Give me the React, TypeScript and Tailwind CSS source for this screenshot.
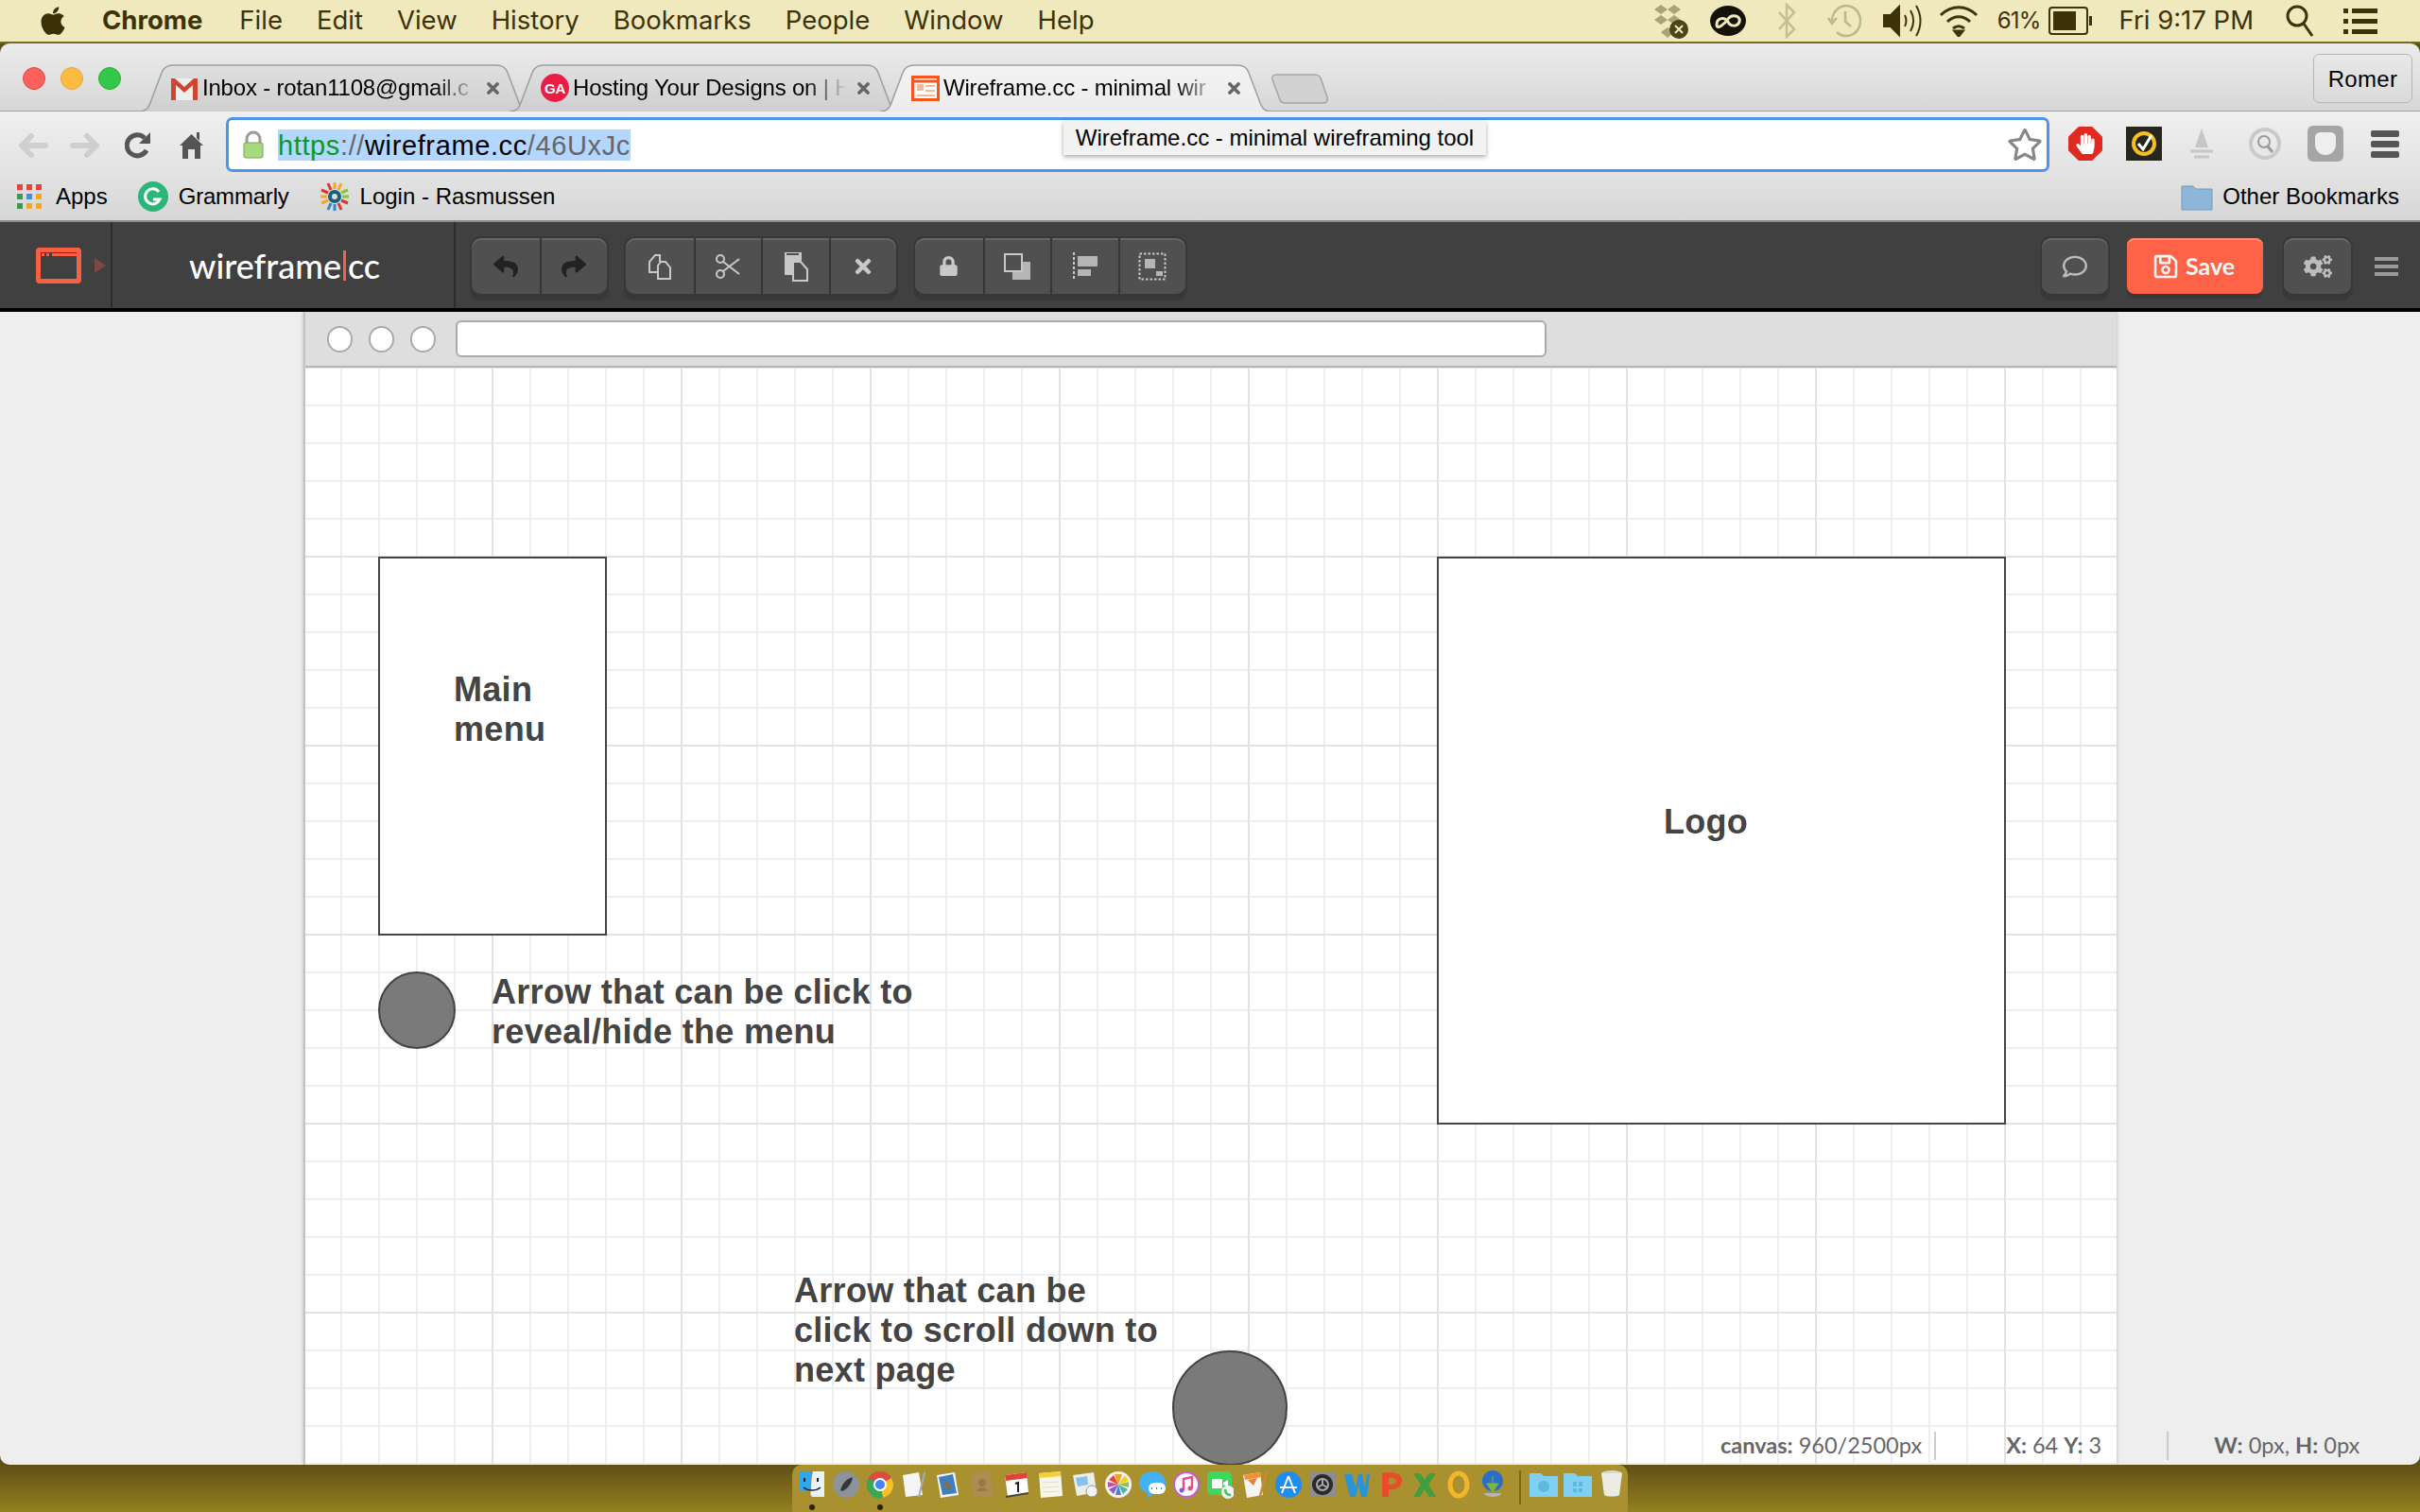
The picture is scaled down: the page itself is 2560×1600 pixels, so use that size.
import { FaApple, FaCogs, FaLock, FaRegComment, FaRegSave, FaRegStar, FaReply, FaShare, FaTimes, FaHandPaper } from "react-icons/fa";

const UI = "font-['Liberation_Sans',sans-serif]";
const LATO = "font-['Lato',sans-serif]";

function Bars({ cls }: { cls: string }) {
  return (
    <div className="flex flex-col gap-[4px]">
      <div className={cls} />
      <div className={cls} />
      <div className={cls} />
    </div>
  );
}

function MenuBar() {
  const items = ["File", "Edit", "View", "History", "Bookmarks", "People", "Window", "Help"];
  return (
    <div className="flex h-[46px] items-center border-b-2 border-[#7a6a1e] bg-[#f0e9bd] text-[27.5px] text-[#3d3208] font-['Inter',sans-serif]">
      <FaApple className="ml-[39px] text-[34px] text-[#3a3008]" />
      <span className="ml-[35px] font-bold">Chrome</span>
      <div className="ml-[39px] flex gap-[36px]">
        {items.map(i => <span key={i}>{i}</span>)}
      </div>
      <div className="ml-auto flex items-center">
        <svg width="38" height="40" viewBox="0 0 38 40" className="opacity-90">
          <path d="M9 3l7 5-7 5-7-5zM23 3l7 5-7 5-7-5zM9 14l7 5-7 5-7-5zM23 14l7 5-7 5-7-5zM16 27l7 5-7 6-7-6z" fill="#a39c70" />
          <circle cx="28" cy="29" r="10" fill="#3d3208" />
          <path d="M24 25l8 8M32 25l-8 8" stroke="#f0e9bd" strokeWidth="2" />
        </svg>
        <svg width="40" height="40" viewBox="0 0 40 40" className="ml-[22px]">
          <ellipse cx="20" cy="20" rx="19" ry="16" fill="#15120a" />
          <path d="M8 24c0-8 10-8 12-3s10 6 12 0-8-9-12-3-12 12-12 6z" fill="none" stroke="#f0e9bd" strokeWidth="3" />
        </svg>
        <svg width="22" height="38" viewBox="0 0 22 38" fill="none" stroke="#c4bd96" strokeWidth="2.5" className="ml-[31px]">
          <path d="M3 10l16 18-8 8V2l8 8L3 28" />
        </svg>
        <svg width="36" height="38" viewBox="0 0 36 38" fill="none" stroke="#bdb68e" strokeWidth="2.5" className="ml-[32px]">
          <path d="M5 19a15 16 0 1 1 5 12" />
          <path d="M1 16l4 6 5-6" />
          <path d="M19 9v11l6 5" />
        </svg>
        <svg width="42" height="36" viewBox="0 0 42 36" fill="none" stroke="#3d3208" strokeWidth="2" className="ml-[23px]">
          <path d="M1 12h7l9-9v30l-9-9H1z" fill="#3d3208" />
          <path d="M23 12c2 4 2 8 0 12M29 7c4 7 4 15 0 22M35 2c6 10 6 22 0 32" />
        </svg>
        <svg width="42" height="34" viewBox="0 0 42 34" fill="none" stroke="#3d3208" strokeWidth="3" className="ml-[17px]">
          <path d="M2 11c11-11 27-11 38 0M9 18c7-7 17-7 24 0M15 25c4-3 8-3 12 0" />
          <path d="M21 33l-4-5h8z" fill="#3d3208" />
        </svg>
        <span className="ml-[20px] text-[24px] tracking-[-0.8px]">61%</span>
        <div className="relative ml-[8px] flex h-[30px] w-[42px] items-stretch rounded-[4px] border-2 border-[#3d3208] p-[3px]">
          <div className="w-[24px] bg-[#3d3208]" />
        </div>
        <div className="ml-[1px] h-[10px] w-[3px] bg-[#3d3208]" />
        <span className="ml-[29px] text-[27.5px]">Fri 9:17 PM</span>
        <svg width="32" height="36" viewBox="0 0 32 36" fill="none" stroke="#3d3208" strokeWidth="3" className="ml-[33px]">
          <circle cx="13" cy="13" r="10" />
          <path d="M20 21l9 13" />
        </svg>
        <div className="ml-[30px] mr-[45px] flex flex-col gap-[6px]">
          {[0, 1, 2].map(i => (
            <div key={i} className="flex gap-[4px]">
              <div className="h-[5px] w-[5px] bg-[#3d3208]" />
              <div className="h-[5px] w-[27px] bg-[#3d3208]" />
            </div>
          ))}
        </div>
      </div>
    </div>
  );
}

function TabShape({ id, from, to }: { id: string; from: string; to: string }) {
  return (
    <svg className="absolute inset-0" width="414" height="50" viewBox="0 0 414 50">
      <defs>
        <linearGradient id={id} x1="0" y1="0" x2="0" y2="1">
          <stop offset="0" stopColor={from} />
          <stop offset="1" stopColor={to} />
        </linearGradient>
      </defs>
      <path d="M0 50C9 50 11 44 13 38L24 9C26 3 30 1 36 1L378 1C384 1 388 3 390 9L401 38C403 44 405 50 414 50" fill={`url(#${id})`} stroke="#9d9d9d" strokeWidth="1.5" />
    </svg>
  );
}

function Tab({ id, active, icon, title, z }: { id: string; active?: boolean; icon: React.ReactNode; title: string; z: string }) {
  return (
    <div className={`relative -mb-px -mr-[22px] h-[50px] w-[414px] shrink-0 ${z}`}>
      <TabShape id={id} from={active ? "#f3f3f3" : "#dfdfdf"} to={active ? "#ececec" : "#cfcfcf"} />
      <div className={`relative flex h-[50px] items-center pl-[33px] text-[24px] tracking-[-0.2px] text-black ${UI}`}>
        <div className="h-[30px] w-[30px] shrink-0">{icon}</div>
        <span className="ml-[4px] w-[293px] whitespace-nowrap [mask-image:linear-gradient(to_right,black_84%,transparent_99%)]">{title}</span>
        <FaTimes className="ml-[5px] text-[19px] text-[#666]" />
      </div>
    </div>
  );
}

function TabStrip() {
  return (
    <div className="flex h-[72px] items-end rounded-t-[10px] border-b border-[#a2a2a2] bg-[linear-gradient(#ececec,#d7d7d7)]">
      <div className="mb-[22px] ml-[24px] flex gap-[16px]">
        <div className="h-[24px] w-[24px] rounded-full border border-[#e2463f] bg-[#fc615d]" />
        <div className="h-[24px] w-[24px] rounded-full border border-[#e1a73e] bg-[#fdbc40]" />
        <div className="h-[24px] w-[24px] rounded-full border border-[#2dac2f] bg-[#34c84a]" />
      </div>
      <div className="ml-[19px] flex items-end">
        <Tab id="t1" z="z-0" title="Inbox - rotan1108@gmail.c" icon={
          <svg viewBox="0 0 30 30" width="30" height="30">
            <path d="M1 5h28v23H1z" fill="#eee" />
            <path d="M1 5v23h5V12l9 8 9-8v16h5V5h-4L15 14 5 5z" fill="#d0452f" />
          </svg>
        } />
        <Tab id="t2" z="z-0" title="Hosting Your Designs on | H" icon={
          <svg viewBox="0 0 30 30" width="30" height="30">
            <circle cx="15" cy="15" r="15" fill="#ea1e45" />
            <text x="15" y="21" textAnchor="middle" fontSize="15" fontWeight="700" fill="#fff" fontFamily="Liberation Sans">GA</text>
          </svg>
        } />
        <Tab id="t3" active z="z-10" title="Wireframe.cc - minimal wir" icon={
          <svg viewBox="0 0 30 30" width="30" height="30">
            <rect x="1.5" y="3.5" width="27" height="24" fill="#fff" stroke="#f9541d" strokeWidth="3" />
            <path d="M3 8h24" stroke="#f9541d" strokeWidth="3" />
            <path d="M6 11h7v7H6zM15 12h10v2H15zM15 17h10v2H15zM6 22h19v2H6z" fill="#fbb898" />
          </svg>
        } />
        <svg width="66" height="34" viewBox="0 0 64 34" className="relative z-0 mb-[6px] ml-[19px]">
          <path d="M7 2L48 2C52 2 54 4 55 8L61 26C62 30 60 32 57 32L16 32C13 32 11 30 10 26L3 7C2 4 4 2 7 2z" fill="#d2d2d2" stroke="#a5a5a5" strokeWidth="1.5" />
        </svg>
      </div>
      <div className={`mb-[8px] ml-auto mr-[8px] flex h-[52px] w-[105px] items-center justify-center rounded-[6px] border border-[#b5b5b5] pt-[2px] text-[24px] tracking-[0.3px] text-black ${UI}`}>Romer</div>
    </div>
  );
}

function NavArrow({ flip }: { flip?: boolean }) {
  return (
    <svg width="32" height="28" viewBox="0 0 32 28" fill="none" stroke="#cfcfcf" strokeWidth="6" strokeLinecap="round" strokeLinejoin="round" className={flip ? "-scale-x-100" : ""}>
      <path d="M29 14H5M14 4L4 14l10 10" />
    </svg>
  );
}

function Toolbar() {
  return (
    <div className="relative flex h-[64px] items-start bg-[linear-gradient(#efefef,#e3e3e3)] pt-[6px]">
      <div className="ml-[19px] mt-[15px] flex items-center">
        <NavArrow />
        <div className="ml-[23px]"><NavArrow flip /></div>
        <svg width="28" height="30" viewBox="0 0 28 30" fill="none" className="ml-[26px]">
          <path d="M23 20a11 11 0 1 1-2-13" stroke="#555" strokeWidth="5" />
          <path d="M27 1v12H15z" fill="#555" />
        </svg>
        <svg width="25" height="30" viewBox="0 0 25 30" className="ml-[30px]">
          <path d="M12.5 3L25 15h-3v14h-6v-10H9v10H3V15H0zM18 1h3v9l-3-3z" fill="#555" />
        </svg>
      </div>
      <div className="absolute left-[239px] top-[6px] flex h-[58px] w-[1929px] items-center rounded-[7px] border-[3px] border-[#4b96ea] bg-white">
        <svg width="24" height="30" viewBox="0 0 24 30" className="ml-[14px]">
          <path d="M5 14V9a7 7 0 0 1 14 0v5" fill="none" stroke="#9a9a9a" strokeWidth="3" />
          <rect x="2" y="13" width="20" height="16" rx="2" fill="#a8d97f" stroke="#74a851" />
        </svg>
        <div className={`ml-[14px] flex h-[33px] items-center bg-[#b3d7fe] pt-[3px] text-[29px] tracking-[0.62px] ${UI}`}>
          <span className="text-[#0b9a1c]">https</span>
          <span className="text-[#666]">://</span>
          <span className="text-black">wireframe.cc</span>
          <span className="text-[#666]">/46UxJc</span>
        </div>
        <FaRegStar className="ml-auto mr-[4px] text-[38px] text-[#888]" />
      </div>
      <div className="absolute left-[2188px] top-[15px] flex items-center">
        <div className="flex h-[36px] w-[36px] items-center justify-center bg-[#e0291f] [clip-path:polygon(30%_0,70%_0,100%_30%,100%_70%,70%_100%,30%_100%,0_70%,0_30%)]">
          <FaHandPaper className="text-[22px] text-white" />
        </div>
        <div className="ml-[25px] flex h-[36px] w-[38px] items-center justify-center bg-[#26251e]">
          <svg width="28" height="28" viewBox="0 0 28 28" fill="none">
            <circle cx="14" cy="14" r="11" stroke="#f2c11d" strokeWidth="4" />
            <path d="M8 14l5 6 9-15" stroke="#fff" strokeWidth="3" />
          </svg>
        </div>
        <svg width="30" height="34" viewBox="0 0 30 34" className="ml-[27px]">
          <path d="M15 1l7 20H8z" fill="#c6c6c6" />
          <path d="M3 25h24M7 31h16" stroke="#c6c6c6" strokeWidth="3" />
        </svg>
        <svg width="34" height="38" viewBox="0 0 34 38" fill="none" className="ml-[35px]">
          <circle cx="17" cy="19" r="15" stroke="#c9c9c9" strokeWidth="4" />
          <circle cx="16" cy="17" r="6" stroke="#999" strokeWidth="2" />
          <path d="M20 22l5 6" stroke="#999" strokeWidth="3" />
        </svg>
        <div className="ml-[28px] flex h-[38px] w-[38px] items-center justify-center rounded-[6px] bg-[#a5a5a5]">
          <div className="h-[24px] w-[22px] rounded-b-[12px] rounded-t-[6px] bg-[#eeeeee]" />
        </div>
        <div className="ml-[29px]">
          <Bars cls="h-[7px] w-[30px] rounded-[2px] bg-[#555]" />
        </div>
      </div>
      <div className={`absolute left-[1125px] top-[10px] z-20 flex h-[36px] w-[447px] items-center justify-center bg-[#f2f2f2] text-[24px] text-black shadow-[0_2px_5px_rgba(0,0,0,0.35)] ${UI}`}>
        Wireframe.cc - minimal wireframing tool
      </div>
    </div>
  );
}

function BookmarksBar() {
  const apps = ["bg-[#ef4136]", "bg-[#ef4136]", "bg-[#ef4136]", "bg-[#3b9a52]", "bg-[#3d8fe8]", "bg-[#f5a623]", "bg-[#3b9a52]", "bg-[#f5a623]", "bg-[#f5a623]"];
  return (
    <div className={`flex h-[53px] items-center border-b-2 border-[#8c8c8c] bg-[linear-gradient(#e3e3e3,#d6d6d6)] text-[24px] text-black ${UI}`}>
      <div className="ml-[18px] grid grid-cols-3 gap-[4px]">
        {apps.map((c, i) => <div key={i} className={`h-[6px] w-[6px] ${c}`} />)}
      </div>
      <span className="ml-[15px]">Apps</span>
      <svg width="32" height="32" viewBox="0 0 32 32" className="ml-[32px]">
        <circle cx="16" cy="16" r="16" fill="#2cb67a" />
        <path d="M22 11a8 8 0 1 0 1 8h-7" fill="none" stroke="#fff" strokeWidth="3" />
      </svg>
      <span className="ml-[11px] tracking-[-0.2px]">Grammarly</span>
      <svg width="32" height="32" viewBox="0 0 32 32" className="ml-[32px]" strokeWidth="3">
        <circle cx="16" cy="16" r="5" fill="none" stroke="#15607a" strokeWidth="4" />
        <path d="M16 1v7M23 2l-3 7" stroke="#f5a623" />
        <path d="M9 2l3 7M2 9l7 3" stroke="#e1352b" />
        <path d="M30 9l-7 3M31 16h-7" stroke="#8cbf3f" />
        <path d="M30 23l-7-3M23 30l-3-7" stroke="#e1352b" />
        <path d="M16 31v-7M9 30l3-7" stroke="#2f86c9" />
        <path d="M2 23l7-3M1 16h7" stroke="#f5a623" />
      </svg>
      <span className="ml-[11px]">Login - Rasmussen</span>
      <svg width="34" height="30" viewBox="0 0 34 30" className="ml-auto">
        <path d="M1 4h12l3 3h17v22H1z" fill="#8eb6d8" stroke="#6f9cc2" />
      </svg>
      <span className="ml-[10px] mr-[22px]">Other Bookmarks</span>
    </div>
  );
}

function ToolGroup({ children }: { children: React.ReactNode[] }) {
  return (
    <div className="flex h-[59px] rounded-[10px] bg-[#505050] shadow-[inset_0_2px_0_#666,0_0_0_2px_#383838,0_5px_0_2px_#383838]">
      {children.map((c, i) => (
        <div key={i} className={`flex h-full w-[71.5px] items-center justify-center ${i > 0 ? "border-l-2 border-[#353535]" : ""}`}>{c}</div>
      ))}
    </div>
  );
}

function AppToolbar() {
  return (
    <div className="flex h-[95px] items-start border-b-4 border-black bg-[#404040]">
      <div className="flex h-[91px] w-[119px] items-center border-r-2 border-[#2c2c2c]">
        <div className="ml-[38px] h-[38px] w-[48px] rounded-[4px] border-[5px] border-[#fb5f43] pt-[1px]">
          <div className="ml-[1px] flex gap-[2px]">
            <div className="h-[3px] w-[3px] bg-[#fb5f43]" />
            <div className="h-[3px] w-[3px] bg-[#fb5f43]" />
            <div className="ml-[1px] h-[3px] w-[26px] bg-[#fb5f43]" />
          </div>
        </div>
        <div className="ml-[14px] h-0 w-0 border-y-[8px] border-l-[12px] border-y-transparent border-l-[#7b4a40]" />
      </div>
      <div className={`flex h-[91px] w-[363px] items-center border-r-2 border-[#2c2c2c] pl-[81px] text-[36px] font-medium text-white ${LATO}`}>
        <span>wireframe</span>
        <div className="mx-[2px] h-[32px] w-[3px] bg-[#fb5f43]" />
        <span>cc</span>
      </div>
      <div className="ml-[17px] mt-[17px] flex gap-[20px]">
        <ToolGroup>{[
          <FaReply key="u" className="text-[26px] text-[#222]" />,
          <FaShare key="r" className="text-[26px] text-[#222]" />,
        ]}</ToolGroup>
        <ToolGroup>{[
          <svg key="c" width="26" height="28" viewBox="0 0 26 28" fill="none" stroke="#c8c8c8" strokeWidth="2">
            <path d="M12 20H2V9l6-7h5v7" />
            <path d="M14 9h5l5 6v12H11V13z" fill="#505050" />
          </svg>,
          <svg key="s" width="26" height="28" viewBox="0 0 26 28" fill="none" stroke="#c8c8c8" strokeWidth="2">
            <circle cx="5" cy="6" r="4" />
            <circle cx="5" cy="22" r="4" />
            <path d="M8 9l17 13M8 19l17-13" />
          </svg>,
          <svg key="p" width="26" height="32" viewBox="0 0 26 32">
            <path d="M1 1h18v24H1z" fill="#c8c8c8" />
            <path d="M3 3h13" stroke="#505050" strokeWidth="2" />
            <path d="M10 11h8l7 8v12H10z" fill="#505050" stroke="#c8c8c8" strokeWidth="2" />
          </svg>,
          <FaTimes key="x" className="text-[24px] text-[#c8c8c8]" />,
        ]}</ToolGroup>
        <ToolGroup>{[
          <FaLock key="l" className="text-[21px] text-[#c8c8c8]" />,
          <svg key="o" width="30" height="30" viewBox="0 0 30 30" fill="none">
            <path d="M10 10h19v19H10z" fill="#b5b5b5" />
            <path d="M2 2h18v18H2z" fill="#505050" stroke="#c8c8c8" strokeWidth="2" />
          </svg>,
          <svg key="a" width="28" height="32" viewBox="0 0 28 32">
            <path d="M2 1v30" stroke="#c8c8c8" strokeWidth="2" strokeDasharray="3 2" />
            <path d="M6 5h21v11H6zM6 19h14v7H6z" fill="#b5b5b5" />
          </svg>,
          <svg key="g" width="30" height="30" viewBox="0 0 30 30">
            <rect x="1.5" y="1.5" width="27" height="27" fill="none" stroke="#c8c8c8" strokeWidth="2" strokeDasharray="2.5 2" />
            <path d="M7 7h11v10H7zM19 20h7v5h-7z" fill="#b5b5b5" />
          </svg>,
        ]}</ToolGroup>
      </div>
      <div className="ml-auto mt-[17px] flex items-start">
        <div className="flex h-[59px] w-[70px] items-center justify-center rounded-[10px] bg-[#505050] shadow-[inset_0_2px_0_#666,0_0_0_2px_#383838,0_5px_0_2px_#383838]">
          <FaRegComment className="text-[26px] text-[#bdbdbd]" />
        </div>
        <div className={`ml-[20px] flex h-[59px] w-[144px] items-center justify-center rounded-[8px] bg-[#ff6347] pr-[3px] text-[25px] font-bold text-[#f5f5f5] shadow-[inset_0_2px_0_#ff8a72,0_5px_0_0_#383838] ${LATO}`}>
          <FaRegSave className="mr-[7px] text-[28px]" />
          Save
        </div>
        <div className="ml-[22px] flex h-[59px] w-[71px] items-center justify-center rounded-[10px] bg-[#505050] shadow-[inset_0_2px_0_#666,0_0_0_2px_#383838,0_5px_0_2px_#383838]">
          <FaCogs className="text-[30px] text-[#bdbdbd]" />
        </div>
        <div className="ml-[25px] mr-[23px] mt-[20px]">
          <Bars cls="h-[4px] w-[25px] bg-[#9a9a9a]" />
        </div>
      </div>
    </div>
  );
}

function Canvas() {
  const label = "absolute text-[36px] leading-[42px] font-bold tracking-[0.3px] text-[#444] font-['Liberation_Sans',sans-serif]";
  return (
    <div className="h-full w-[1918px] overflow-hidden border-l-2 border-[#c4c4c4] bg-white shadow-[0_0_4px_rgba(0,0,0,0.25)]">
      <div className="flex h-[59px] items-center border-b-2 border-[#b5b5b5] bg-[#dedede] pl-[23px]">
        <div className="h-[28px] w-[27px] rounded-full border-2 border-[#aaa] bg-white" />
        <div className="ml-[17px] h-[28px] w-[27px] rounded-full border-2 border-[#aaa] bg-white" />
        <div className="ml-[17px] h-[28px] w-[27px] rounded-full border-2 border-[#aaa] bg-white" />
        <div className="ml-[21px] h-[39px] w-[1154px] rounded-[6px] border-2 border-[#aaa] bg-white" />
      </div>
      <div className="relative h-[1161px] bg-[linear-gradient(to_right,#e2e2e2_2px,transparent_2px),linear-gradient(#e2e2e2_2px,transparent_2px),linear-gradient(to_right,#eeeeee_2px,transparent_2px),linear-gradient(#eeeeee_2px,transparent_2px)] bg-[size:200px_200px,200px_200px,40px_40px,40px_40px] bg-[position:197px_0,0_199px,37px_0,0_39px]">
        <div className="absolute left-[77px] top-[200px] h-[401px] w-[242px] border-2 border-[#444] bg-white" />
        <div className={`${label} left-[157px] top-[320px]`}>Main<br />menu</div>
        <div className="absolute left-[1197px] top-[200px] h-[601px] w-[602px] border-2 border-[#444] bg-white" />
        <div className={`${label} left-[1437px] top-[460px]`}>Logo</div>
        <div className="absolute left-[77px] top-[639px] h-[82px] w-[82px] rounded-full border-2 border-[#444] bg-[#7a7a7a]" />
        <div className={`${label} left-[197px] top-[640px] whitespace-nowrap`}>Arrow that can be click to<br />reveal/hide the menu</div>
        <div className={`${label} left-[517px] top-[956px] whitespace-nowrap`}>Arrow that can be<br />click to scroll down to<br />next page</div>
        <div className="absolute left-[917px] top-[1040px] h-[122px] w-[122px] rounded-full border-2 border-[#444] bg-[#7a7a7a]" />
      </div>
    </div>
  );
}

function StatusBar() {
  return (
    <div className={`absolute bottom-0 left-[1820px] flex h-[40px] items-center text-[23.5px] text-[#666] ${LATO}`}>
      <span><b>canvas:</b> 960/2500px</span>
      <div className="ml-[13px] h-[30px] w-[2px] bg-[#ccc]" />
      <span className="ml-[74px]"><b>X:</b> 64 <b>Y:</b> 3</span>
      <div className="ml-[69px] h-[30px] w-[2px] bg-[#ccc]" />
      <span className="ml-[48px]"><b>W:</b> 0px, <b>H:</b> 0px</span>
    </div>
  );
}

const dockIcons: React.ReactNode[] = [
  <><path d="M1 1h14c-3 8-3 15-2 20H1z" fill="#2fa6f2" /><path d="M15 1h12v27H14c-2-2-2-5-1-7 0-5 0-12 2-20z" fill="#e9f2f8" /><path d="M6 8v4M20 8v4" stroke="#223" strokeWidth="2" /><path d="M5 18c5 4 13 4 18 0" stroke="#223" strokeWidth="1.5" fill="none" /></>,
  <><circle cx="14" cy="15" r="14" fill="#8c9499" /><path d="M8 21c2-7 6-12 13-14-1 7-5 12-11 15z" fill="#33373a" /></>,
  <><circle cx="14" cy="15" r="14" fill="#dd4b3e" /><path d="M14 15L26 8a14 14 0 0 1-9 21z" fill="#f6c026" /><path d="M14 15L17 29A14 14 0 0 1 2 8z" fill="#3aa757" /><circle cx="14" cy="15" r="7" fill="#fff" /><circle cx="14" cy="15" r="5" fill="#4285f4" /></>,
  <><path d="M2 5l17-3 4 24-18 2z" fill="#f5f5f5" /><path d="M25 2l-6 26" stroke="#9db0b8" strokeWidth="2" /></>,
  <><path d="M2 5l19-3 4 24-19 3z" fill="#f4f7fa" /><path d="M4 7l15-3 4 20-15 2z" fill="#3f7fbe" /><path d="M10 10l6 6 1 6-6-5z" fill="#8a6a3b" /></>,
  <><path d="M3 3l20-2 2 26-19 2c-3-8-3-18-3-26z" fill="#b08c55" /><circle cx="14" cy="13" r="4" fill="#9a7844" /><path d="M8 22c2-5 10-5 12 0z" fill="#9a7844" /></>,
  <><path d="M2 5l23-3 2 22-22 4z" fill="#fff" /><path d="M2 5l23-3 1 6-23 3z" fill="#e0433a" /><path d="M13 14l3-1v10" stroke="#222" strokeWidth="2" fill="none" /><path d="M3 28l24-4" stroke="#444" strokeWidth="2" /></>,
  <><path d="M2 3l23-2 2 26-23 2z" fill="#f8f6e6" /><path d="M2 3l23-2 0 5-23 2z" fill="#f7cd3b" /><path d="M6 13l17-1M6 18l18-1M6 23l18-1" stroke="#ddd" /></>,
  <><path d="M2 5l22-3 3 21-21 4z" fill="#e8efe8" /><path d="M5 8l12-2 1 9-11 2z" fill="#86c1ee" /><circle cx="22" cy="22" r="6" fill="#f2f2f2" stroke="#999" /></>,
  <><circle cx="14" cy="15" r="14" fill="#f3f3f3" /><path d="M14 15L10 4h8z" fill="#f7a21b" /><path d="M14 15L21 5l4 6z" fill="#f5d01d" /><path d="M14 15l11-3v6z" fill="#8cc63f" /><path d="M14 15l10 5-5 5z" fill="#3fb6b0" /><path d="M14 15l3 11h-6z" fill="#4a7fd4" /><path d="M14 15l-5 10-5-5z" fill="#8a5ec9" /><path d="M14 15L3 18v-6z" fill="#d5479d" /><path d="M14 15L4 10l5-5z" fill="#e8433a" /></>,
  <><path d="M14 1c8 0 14 6 14 12s-6 12-14 12c-1 2-3 4-6 4 1-2 1-4 1-5C4 22 0 18 0 13 0 6 6 1 14 1z" fill="#43b2f5" /><rect x="10" y="13" width="18" height="12" rx="6" fill="#fff" /><path d="M13 19h1M18 19h1M23 19h1" stroke="#2f7fd6" strokeWidth="2" /></>,
  <><circle cx="14" cy="15" r="13" fill="#fff" stroke="#c65be0" strokeWidth="2" /><path d="M11 21V9l9-2v12" fill="none" stroke="#ea4c89" strokeWidth="2.5" /><circle cx="9" cy="21" r="2.5" fill="#7a5ce0" /><circle cx="18" cy="19" r="2.5" fill="#ea4c89" /></>,
  <><rect x="0" y="1" width="26" height="25" rx="5" fill="#3ed65c" /><path d="M5 9h11v10H5zM17 13l5-3v8l-5-3z" fill="#fff" /><circle cx="22" cy="23" r="7" fill="#f2f2f2" /><path d="M19 20c0 4 2 6 6 6" stroke="#3ac75a" strokeWidth="2.5" fill="none" /></>,
  <><path d="M2 5l18-3 3 24-17 3z" fill="#f4f4f4" /><path d="M3 5l17-3 1 5-17 3z" fill="#f29035" /><path d="M7 10l10-2-4 8z" fill="#ef7d2c" /><path d="M27 1l-7 26" stroke="#c78b3a" strokeWidth="2.5" /></>,
  <><circle cx="14" cy="15" r="14" fill="#1d8df0" /><path d="M14 6L7 24M14 6l7 18M5 18h18" stroke="#fff" strokeWidth="2" fill="none" /></>,
  <><rect x="0" y="1" width="28" height="27" rx="3" fill="#8d8d8d" /><circle cx="14" cy="15" r="11" fill="#2a2a2a" /><circle cx="14" cy="15" r="6" fill="none" stroke="#aaa" strokeWidth="2" /><path d="M14 15V9M14 15l5 3M14 15l-5 3" stroke="#aaa" strokeWidth="2" /></>,
  <path d="M1 4l8 0 4 14 3-14 4 0 3 14 2-14 3 0-3 24h-6l-3-12-3 12H7z" fill="#2b94d6" />,
  <path d="M5 28V3c12-3 22 0 21 9-1 7-9 9-14 8v8z M12 8v7c5 0 8-1 8-3 0-3-4-5-8-4z" fill="#e84c2b" fillRule="evenodd" />,
  <path d="M2 3h7l5 7 5-7h7l-8 12 8 13h-7l-5-8-5 8H2l8-13z" fill="#3d9f3f" />,
  <><ellipse cx="14" cy="15" rx="9" ry="12" fill="none" stroke="#f2b52c" strokeWidth="5" /></>,
  <><circle cx="14" cy="11" r="11" fill="#2a6fc4" /><path d="M5 24a9 4 0 0 0 18 0" fill="#b5b5b5" /><path d="M14 6v9M8 14l6 9 6-9z" fill="#7ab83b" stroke="#7ab83b" /></>,
];

function Dock() {
  return (
    <div className="absolute bottom-0 left-[838px] flex h-[50px] w-[884px] rounded-t-[10px] bg-[#a8912e] pl-[7px] pt-[6px]">
      <div className="flex items-start gap-[8px]">
        {dockIcons.map((icon, i) => (
          <div key={i} className="relative h-[30px] w-[28px]">
            <svg width="28" height="30" viewBox="0 0 28 30">{icon}</svg>
            {(i === 0 || i === 2) && <div className="absolute left-[11px] top-[36px] h-[6px] w-[6px] rounded-full bg-[#2a2206]" />}
          </div>
        ))}
      </div>
      <div className="ml-[14px] h-[36px] w-[2px] bg-[#7d6a10]" />
      <svg width="30" height="28" viewBox="0 0 30 28" className="ml-[9px]">
        <path d="M0 3h12l3 3h15v22H0z" fill="#7fd0f2" />
        <circle cx="15" cy="17" r="6" fill="#5db8de" />
      </svg>
      <svg width="30" height="28" viewBox="0 0 30 28" className="ml-[6px]">
        <path d="M0 3h12l3 3h15v22H0z" fill="#7fd0f2" />
        <path d="M10 12h4v5h-4zM16 12h4v5h-4zM10 19h4v4h-4zM16 19h4v4h-4z" fill="#5db8de" />
      </svg>
      <svg width="22" height="28" viewBox="0 0 22 28" className="ml-[10px]">
        <ellipse cx="11" cy="3" rx="11" ry="3" fill="#d8d8c8" />
        <path d="M0 3h22l-3 23c-2 2-14 2-16 0z" fill="#ecece4" />
      </svg>
    </div>
  );
}

export default function App() {
  return (
    <div className="relative h-[1600px] w-[2560px] overflow-hidden bg-[#5f5016]">
      <MenuBar />
      <div className="relative h-[1504px] overflow-hidden rounded-b-[10px]">
        <TabStrip />
        <Toolbar />
        <BookmarksBar />
        <AppToolbar />
        <div className="relative flex h-[1220px] bg-[#eeeeee] pl-[321px]">
          <Canvas />
          <StatusBar />
        </div>
      </div>
      <div className="h-[50px] w-full bg-[linear-gradient(#5f5016,#93801e)]" />
      <Dock />
    </div>
  );
}
